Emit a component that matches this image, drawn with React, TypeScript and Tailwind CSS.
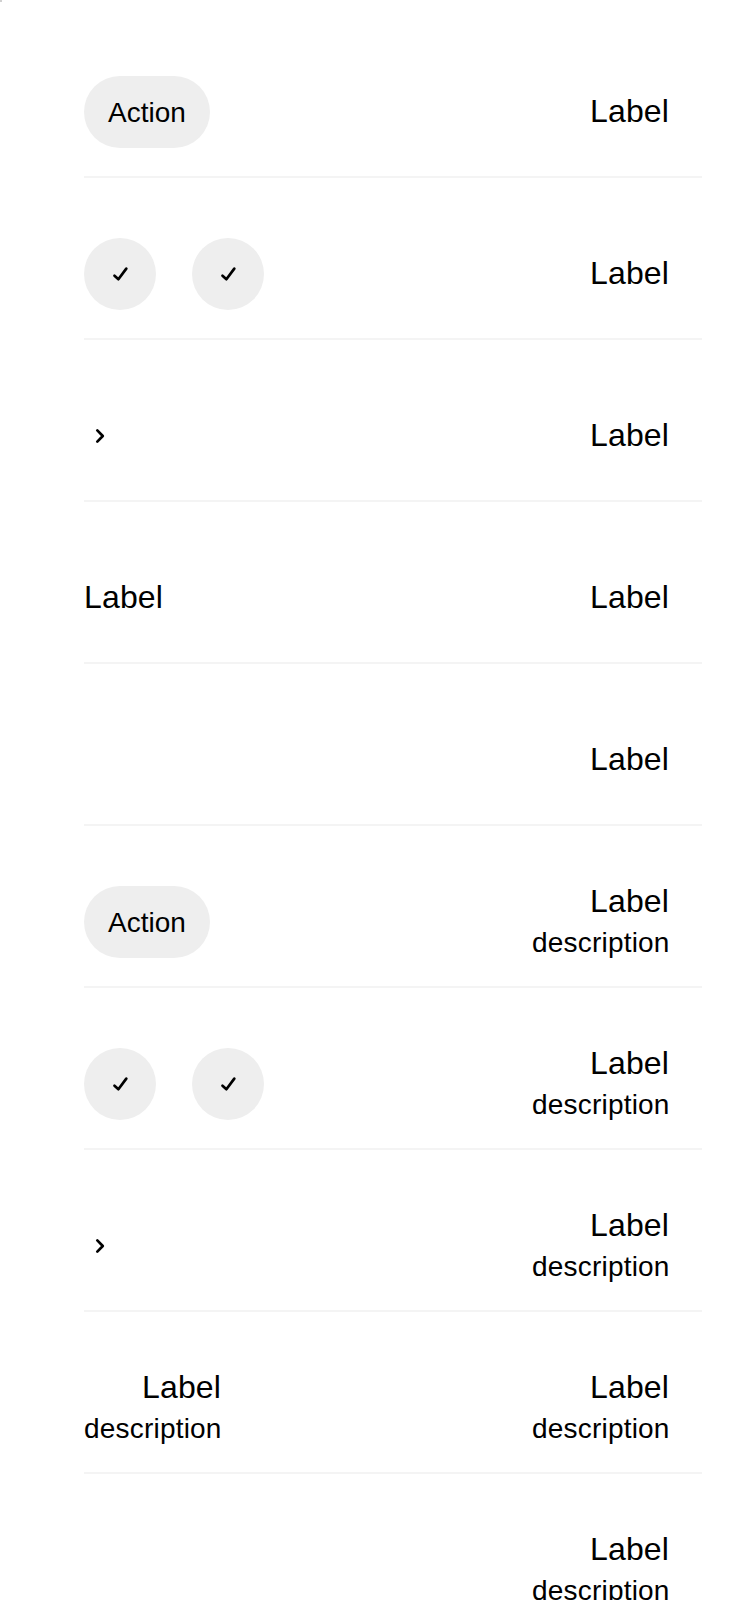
import React from "react";

const chip = "flex h-[72px] items-center justify-center rounded-full bg-[#eeeeee]";

function Check() {
  return (
    <div className={`${chip} w-[72px]`}>
      <svg width="24" height="24" viewBox="0 0 24 24" fill="none" stroke="black" strokeWidth="2.7" strokeLinecap="round" strokeLinejoin="round">
        <path d="M6.5 13.7L10.4 17.2L18.3 6.6" />
      </svg>
    </div>
  );
}

function Text({ description }: { description?: boolean }) {
  return (
    <div className="flex flex-col items-end pb-0.5">
      <span className="w-20 text-[32px] leading-[44px] tracking-[0.16px]">Label</span>
      {description && <span className="w-[138px] text-[28px] leading-[40px] tracking-[0.2px]">description</span>}
    </div>
  );
}

function Leading({ kind, description }: { kind: string; description: boolean }) {
  if (kind === "action") return <div className={`${chip} w-[126px] pt-0.5 text-[28px] leading-[40px]`}>Action</div>;
  if (kind === "checks")
    return (
      <div className="flex gap-9">
        <Check />
        <Check />
      </div>
    );
  if (kind === "arrow")
    return (
      <svg width="32" height="32" viewBox="0 0 32 32" fill="none" stroke="black" strokeWidth="2.7" strokeLinecap="round" strokeLinejoin="round">
        <path d="M13.3 10.4L18.8 16L13.3 21.6" />
      </svg>
    );
  if (kind === "label") return <Text description={description} />;
  return <div />;
}

const kinds = ["action", "checks", "arrow", "label", "empty"];

export default function App() {
  return (
    <div className="relative h-[1600px] w-[750px] overflow-hidden bg-white pt-[16px] pr-12 pl-[84px] font-['Liberation_Sans',sans-serif] text-black">
      <div className="absolute top-0 left-0 size-0.5 bg-[#d0d0d0]" />
      {[false, true].map((description) =>
        kinds.map((kind) => (
          <div key={`${kind}-${description}`} className="flex h-[162px] items-center justify-between border-b-2 border-[#f4f4f4] pt-8 pr-8">
            <Leading kind={kind} description={description} />
            <Text description={description} />
          </div>
        )),
      )}
    </div>
  );
}
